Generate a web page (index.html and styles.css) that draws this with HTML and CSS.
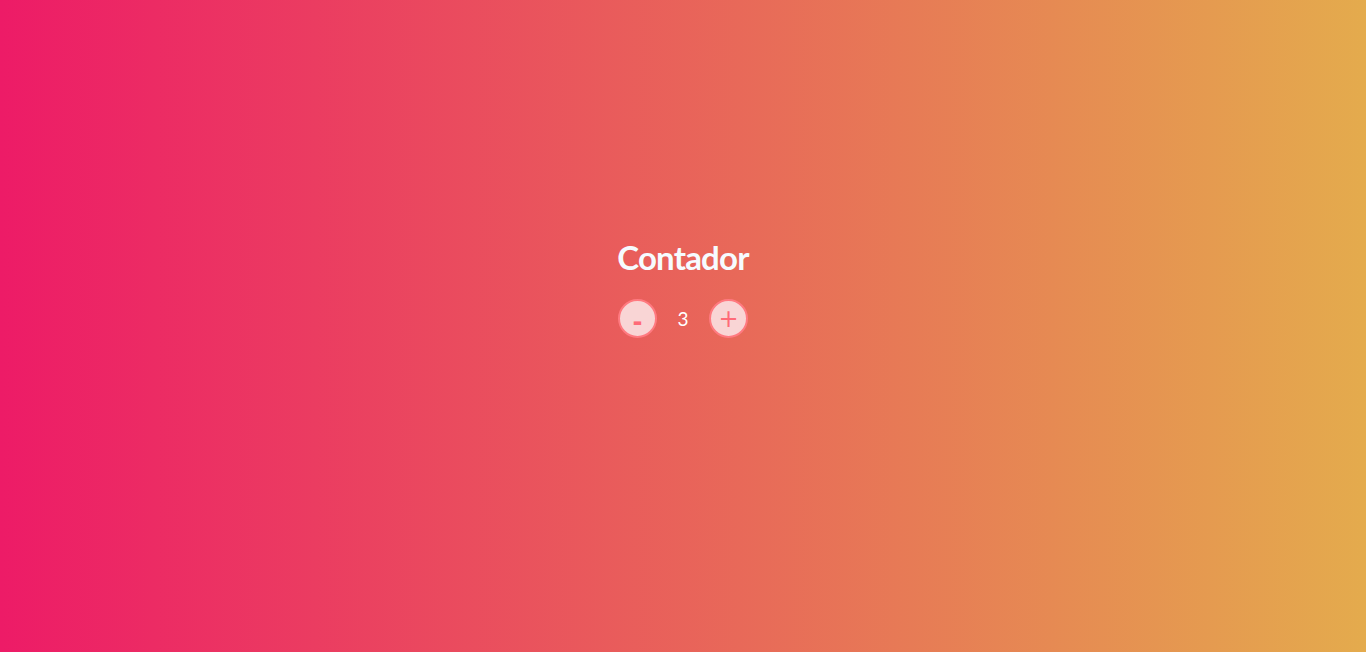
FILE: index.html
```html
<!DOCTYPE html>
<html lang="es">
<head>
<meta charset="UTF-8">
<meta name="viewport" content="width=device-width, initial-scale=1.0">
<title>Contador</title>
<link rel="stylesheet" href="styles.css">
</head>
<body>
<main class="app">
    <h1 class="title">Contador</h1>
    <div class="counter">
        <button class="btn btn-minus" type="button">-</button>
        <span class="value">3</span>
        <button class="btn" type="button">+</button>
    </div>
</main>
</body>
</html>
```
FILE: styles.css
```css
html, body {
height: 100%;
}
body {
margin: 0;
font-family: "Lato", "Open Sans", sans-serif;
background: linear-gradient(to right, #ed1b67, #e4ab4d);
color: #fff;
}
.app {
display: flex;
flex-direction: column;
align-items: center;
padding-top: 235px;
}
.title {
margin: 0;
font-size: 33px;
font-weight: 700;
letter-spacing: -0.8px;
line-height: 44px;
color: #f6fbff;
}
.counter {
display: flex;
align-items: center;
gap: 19px;
margin-top: 20px;
}
.btn {
width: 39px;
height: 39px;
border-radius: 50%;
border: 2px solid #ff7a80;
background-color: #f9d5d5;
color: #ff6b78;
font-family: "DejaVu Sans", sans-serif;
font-size: 24px;
line-height: 1;
padding: 0;
cursor: pointer;
}
.btn-minus {
padding-top: 6px;
font-weight: 700;
}
.value {
font-size: 19px;
width: 14px;
text-align: center;
}
```
